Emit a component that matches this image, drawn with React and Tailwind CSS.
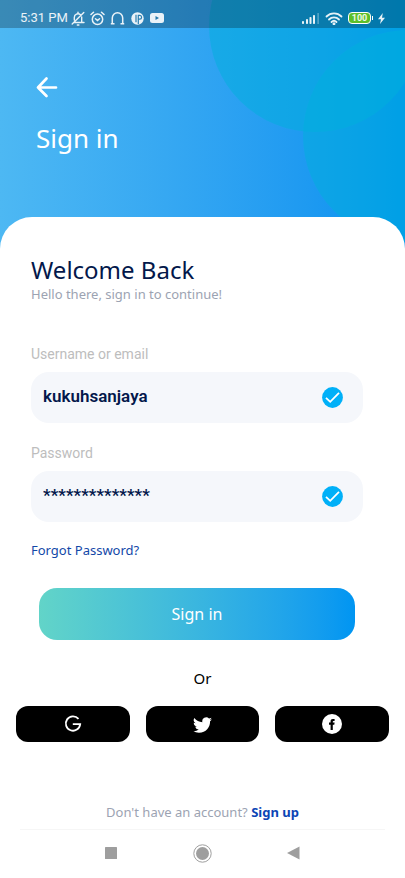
import { useState } from "react";
import { BsTwitter } from "react-icons/bs";

export default function App() {
  const [username, setUsername] = useState("kukuhsanjaya");
  const [password, setPassword] = useState("**************");

  return (
    <div className="min-h-screen w-full bg-white flex flex-col font-['Noto_Sans',sans-serif]">
      {/* Header */}
      <header className="relative overflow-hidden bg-linear-to-r from-[#4db8f3] to-[#0090f0] text-white pb-24">
        <div className="absolute -top-20 left-[209px] size-[212px] rounded-full bg-[#00b0dc]/50" />
        <div className="absolute top-[30px] left-[303px] size-[212px] rounded-full bg-[#00b0dc]/50" />
        <StatusBar />
        <div className="relative px-9 pt-12">
          <button type="button" aria-label="Back" className="block">
            <svg width="22" height="22" viewBox="0 0 22 22" fill="none" stroke="currentColor" strokeWidth="2.7" strokeLinecap="round" strokeLinejoin="round">
              <path d="M20 11.5H2M10.5 2.5L2 11.5l8.5 8.5" />
            </svg>
          </button>
          <h1 className="mt-5 text-[26px] leading-10">Sign in</h1>
        </div>
      </header>

      {/* Card */}
      <main className="relative flex-1 flex flex-col bg-white rounded-t-[32px] -mt-[37px] pt-[39px]">
        <form className="pl-[31px] pr-[42px]" onSubmit={(e) => e.preventDefault()}>
          <h2 className="text-2xl text-[#03184b] leading-7">Welcome Back</h2>
          <p className="text-[13px] leading-5 text-[#9ca3b2]">Hello there, sign in to continue!</p>

          <Field id="username" label="Username or email" value={username} onChange={setUsername} className="mt-10" />
          <Field id="password" label="Password" value={password} onChange={setPassword} className="mt-5" />

          <a href="#forgot" className="block w-fit mt-[18px] text-[13px] leading-5 text-[#1348a8]">
            Forgot Password?
          </a>

          <div className="px-2 mt-7">
            <button type="submit" className="w-full h-[52px] rounded-[18px] bg-linear-to-r from-[#62d4c8] to-[#0095f2] text-white text-base">
              Sign in
            </button>
          </div>
        </form>

        <p className="mt-6 text-center text-[15px] leading-7 text-black">Or</p>

        <div className="grid grid-cols-3 gap-4 px-4 mt-[14px]">
          <SocialButton label="Google">
            <svg width="18" height="18" viewBox="0 0 18 18" fill="none" stroke="currentColor" strokeWidth="1.8">
              <path d="M14.5 3.8A7.2 7.2 0 1 0 16.2 9.2H8.8" />
            </svg>
          </SocialButton>
          <SocialButton label="Twitter">
            <BsTwitter size={19} />
          </SocialButton>
          <SocialButton label="Facebook">
            <svg width="20" height="20" viewBox="0 0 20 20">
              <circle cx="10" cy="10" r="10" fill="currentColor" />
              <path d="M8.6 16V10.7H7V8.5h1.6V7.3c0-1.5.8-2.3 2.3-2.3h1.7v2.1h-1.1c-.5 0-.7.2-.7.7v.7h1.8l-.3 2.2h-1.5V16z" fill="#000" />
            </svg>
          </SocialButton>
        </div>

        <p className="mt-auto pt-6 text-center text-[13px] leading-5 text-[#9ca3b2]">
          Don't have an account?{" "}
          <a href="#signup" className="font-bold text-[#0b45b5]">Sign up</a>
        </p>

        <NavBar />
      </main>
    </div>
  );
}

function Field({ id, label, value, onChange, className }) {
  return (
    <div className={className}>
      <label htmlFor={id} className="block font-[Roboto,sans-serif] text-sm leading-5 text-[#bdbdbd]">
        {label}
      </label>
      <div className="mt-2 h-[51px] flex items-center rounded-[18px] bg-[#f5f7fb] pl-3 pr-5">
        <input
          id={id}
          type="text"
          value={value}
          onChange={(e) => onChange(e.target.value)}
          className="flex-1 min-w-0 pb-1 bg-transparent outline-none font-[Roboto,sans-serif] text-[17px] leading-6 font-semibold text-[#03184b]"
        />
        <svg width="21" height="21" viewBox="0 0 21 21" fill="none">
          <circle cx="10.5" cy="10.5" r="10.4" fill="#00b0f8" />
          <path d="M4 10.8l4.2 4L17 5.9" stroke="#fff" strokeWidth="1.8" />
        </svg>
      </div>
    </div>
  );
}

function SocialButton({ label, children }) {
  return (
    <button type="button" aria-label={label} className="h-9 rounded-xl bg-black text-white flex items-center justify-center">
      {children}
    </button>
  );
}

function StatusBar() {
  return (
    <div className="relative h-7 flex items-center justify-between bg-black/25 px-5 pt-2 font-[Roboto,sans-serif] text-white/90">
      <div className="flex items-center gap-[5px]">
        <span className="text-[13px] leading-4">5:31 PM</span>
        {/* muted bell */}
        <svg className="-ml-0.5" width="14" height="15" viewBox="0 0 14 15" fill="none" stroke="currentColor" strokeWidth="1.4" strokeLinecap="round">
          <path d="M3.5 11.5H13M3.3 9V6.5a3.7 3.7 0 0 1 6.2-2.8M10.7 6v5.3M6.3 14h1.6M12.8 1.5L1.2 13M7 1.2v1.2" />
        </svg>
        <svg width="15" height="15" viewBox="0 0 15 15" fill="none" stroke="currentColor" strokeWidth="1.5" strokeLinecap="round">
          <circle cx="7.5" cy="8.3" r="5.2" />
          <path d="M1 3.5L3.5 1.2M14 3.5L11.5 1.2M5.5 7.8l2 1.7 2-1.7" />
        </svg>
        <svg width="15" height="15" viewBox="0 0 15 15" fill="none" stroke="currentColor" strokeWidth="1.5">
          <path d="M.8 12.8h3.7M2.3 12V7a5.2 5.2 0 0 1 10.400 0v5M10.5 12.8h3.700" />
        </svg>
        <svg className="ml-px" width="13" height="13" viewBox="0 0 13 13">
          <circle cx="6.5" cy="6.5" r="6.2" fill="currentColor" />
          <path d="M5 2.8v7.500M7.300 12V3.400h1.400a1.900 1.900 0 0 1 0 3.800H7.300" fill="none" stroke="#2a7eb0" strokeWidth="1.2" />
        </svg>
        <svg className="ml-px" width="14" height="10" viewBox="0 0 14 10">
          <rect width="14" height="10" rx="2.5" fill="currentColor" />
          <path d="M5.5 3v4l3.500-2z" fill="#2478ab" />
        </svg>
      </div>
      <div className="flex items-center gap-[5px]">
        <svg width="18" height="12" viewBox="0 0 18 12" fill="currentColor">
          <rect x="0" y="9" width="2" height="3" rx=".8" />
          <rect x="4" y="7" width="2" height="5" rx=".8" />
          <rect x="7.5" y="5" width="2" height="7" rx=".8" />
          <rect x="11" y="3" width="2" height="9" rx=".8" />
          <rect x="15.5" y="1" width="1.2" height="11" opacity=".45" />
        </svg>
        <svg width="18" height="13" viewBox="0 0 18 13" fill="none" stroke="currentColor" strokeWidth="1.8" strokeLinecap="round">
          <path d="M1.500 4.500a10.500 10.500 0 0 1 15 0M4 7.500a7 7 0 0 1 10 0M6.500 10a3.600 3.600 0 0 1 5 0" />
          <circle cx="9" cy="11.7" r=".6" fill="currentColor" />
        </svg>
        <div className="flex items-center">
          <span className="h-3 w-[23px] flex items-center justify-center rounded-[4px] border border-white bg-[#5cbf2a] text-[9px] leading-none font-bold">100</span>
          <span className="h-1 w-px ml-px bg-white" />
        </div>
        <svg width="7" height="11" viewBox="0 0 7 11" fill="currentColor">
          <path d="M4.800 0L0 6.300h3L2 11l5-6.300H4z" />
        </svg>
      </div>
    </div>
  );
}

function NavBar() {
  return (
    <nav className="mt-[7px] mx-5 h-[49px] pb-0.5 border-t border-[#f6f6f6] flex items-center justify-center gap-[75px] text-[#9e9e9e]">
      <button type="button" aria-label="Recent apps">
        <svg width="14" height="14" viewBox="0 0 14 14" fill="currentColor">
          <rect x="1" y="1" width="12" height="12" rx=".5" />
        </svg>
      </button>
      <button type="button" aria-label="Home">
        <svg width="19" height="19" viewBox="0 0 19 19">
          <circle cx="9.5" cy="9.5" r="8.7" fill="none" stroke="currentColor" strokeWidth="1" />
          <circle cx="9.5" cy="9.5" r="6.5" fill="currentColor" />
        </svg>
      </button>
      <button type="button" aria-label="Go back">
        <svg width="14" height="14" viewBox="0 0 14 14" fill="currentColor">
          <path d="M12.500.5v13L0 7z" />
        </svg>
      </button>
    </nav>
  );
}
